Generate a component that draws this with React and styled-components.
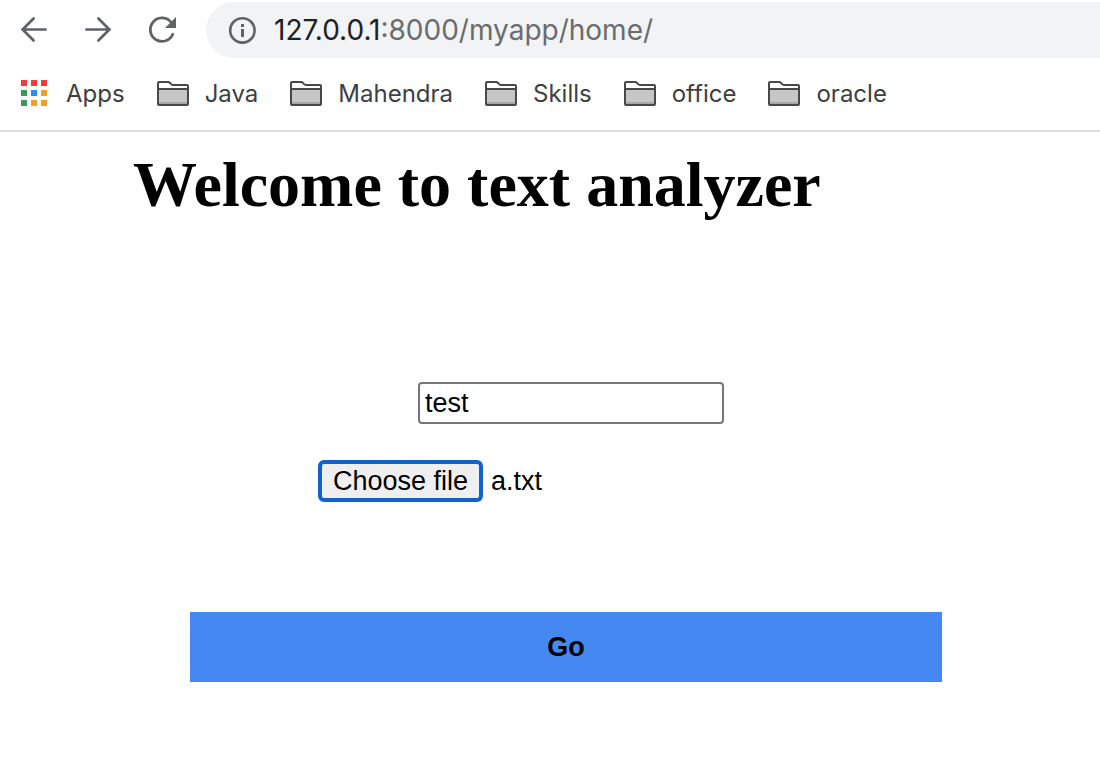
import React, { useRef, useState } from "react";
import styled, { createGlobalStyle } from "styled-components";

const GlobalStyle = createGlobalStyle`
  *, *::before, *::after { box-sizing: border-box; }
  body {
    margin: 0;
    background: #fff;
    color: #000;
    font-family: "Liberation Serif", "Times New Roman", serif;
  }
`;

const BrowserBar = styled.header`
  border-bottom: 2px solid #dadce0;
  font-family: Inter, "Liberation Sans", sans-serif;
`;

const Toolbar = styled.div`
  display: flex;
  align-items: center;
  padding: 2px 0 0 18px;
`;

const NavButtons = styled.nav`
  display: flex;
  gap: 32px;
  margin-right: 28px;
`;

const IconButton = styled.button`
  display: flex;
  width: 32px;
  height: 32px;
  padding: 0;
  border: 0;
  background: none;
  color: #5f6368;
`;

const AddressBar = styled.div`
  display: flex;
  flex: 1;
  align-items: center;
  gap: 16px;
  height: 56px;
  padding-left: 20px;
  border-radius: 28px 0 0 28px;
  background: #f1f3f4;
  color: #5f6368;
`;

const Url = styled.span`
  font-size: 28px;
  line-height: 32px;
  white-space: nowrap;
  color: #6a6c6f;
`;

const Host = styled.span`
  color: #202124;
`;

const Bookmarks = styled.nav`
  display: flex;
  align-items: center;
  gap: 32px;
  height: 72px;
  padding-left: 18px;
`;

const Bookmark = styled.a`
  display: flex;
  align-items: center;
  gap: 16px;
  color: #3c4043;
  font-size: 24px;
  line-height: 32px;
  text-decoration: none;
  white-space: nowrap;
`;

const Page = styled.main`
  padding: 17px 158px 86px 133px;
`;

const Title = styled.h1`
  margin: 0;
  font-size: 64px;
  font-weight: 700;
  line-height: 72px;
  white-space: nowrap;
`;

const AnalyzerForm = styled.form`
  display: flex;
  flex-direction: column;
  align-items: flex-start;
  margin-top: 161px;
  padding-left: 57px;
  font-family: "Liberation Sans", Arial, sans-serif;
  font-size: 27px;
`;

const TextField = styled.input`
  width: 306px;
  height: 42px;
  margin-left: 228px;
  padding: 0 5px;
  border: 2px solid #767676;
  border-radius: 4px;
  outline: none;
  background: #fff;
  color: #000;
  font: inherit;
`;

const FileField = styled.div`
  display: flex;
  align-items: center;
  gap: 8px;
  margin: 36px 0 110px 128px;
`;

const FileButton = styled.button`
  height: 42px;
  padding: 0 11px;
  border: 4px solid #1062cc;
  border-radius: 6px;
  background: #efefef;
  color: #000;
  font: inherit;
  line-height: 32px;
  white-space: nowrap;
`;

const GoButton = styled.button`
  width: 100%;
  height: 70px;
  padding: 0;
  border: 0;
  background: #4688f1;
  color: #000;
  font: inherit;
  font-weight: 700;
`;

const BackIcon = () => (
  <svg width="32" height="32" viewBox="0 0 32 32" fill="none" stroke="currentColor" strokeWidth="2.7" strokeLinecap="round" aria-hidden="true">
    <path d="M27.6 15.5H4.6M15.6 4.5L4.6 15.5l11 11" />
  </svg>
);

const ForwardIcon = () => (
  <svg width="32" height="32" viewBox="0 0 32 32" fill="none" stroke="currentColor" strokeWidth="2.7" strokeLinecap="round" aria-hidden="true">
    <path d="M4.4 15.5h23M16.4 4.5l11 11-11 11" />
  </svg>
);

const ReloadIcon = () => (
  <svg width="32" height="32" viewBox="0 0 32 32" fill="none" aria-hidden="true">
    <path d="M26.8 20.2A11.7 11.7 0 1 1 24.5 7.6" stroke="currentColor" strokeWidth="2.8" strokeLinecap="round" />
    <path d="M30 3v11H19z" fill="currentColor" />
  </svg>
);

const InfoIcon = () => (
  <svg width="32" height="32" viewBox="0 0 32 32" fill="none" aria-hidden="true">
    <circle cx="16.4" cy="16.4" r="12.2" stroke="currentColor" strokeWidth="2.6" />
    <path d="M15 10h3v3h-3zM15 15h3v8h-3z" fill="currentColor" />
  </svg>
);

const APP_COLORS = [
  "#f53a37", "#f53a37", "#f53a37",
  "#3a9a5b", "#2b8cf4", "#f0a024",
  "#3a9a5b", "#f0a024", "#f0a024",
];

const AppsIcon = () => (
  <svg width="32" height="32" viewBox="0 0 32 32" aria-hidden="true">
    {APP_COLORS.map((color, i) => (
      <rect key={i} x={3 + (i % 3) * 10} y={2 + Math.floor(i / 3) * 10} width="6" height="6" fill={color} />
    ))}
  </svg>
);

const FolderIcon = () => (
  <svg width="32" height="32" viewBox="0 0 32 32" aria-hidden="true">
    <path d="M1 11h30v14H1z" fill="#c6c6c6" />
    <path d="M1 24h30v2.5H1z" fill="#a6a6a6" />
    <path
      d="M2 27h28q1 0 1-1V8q0-1-1-1H16q-1.2 0-2-1l-1-1.1Q12.2 4 11.2 4H2q-1 0-1 1v21q0 1 1 1zM1 11h30"
      fill="none"
      stroke="#484848"
      strokeWidth="2"
    />
  </svg>
);

const FOLDERS = ["Java", "Mahendra", "Skills", "office", "oracle"];

export default function App() {
  const picker = useRef(null);
  const [text, setText] = useState("test");
  const [fileName, setFileName] = useState("a.txt");

  return (
    <>
      <GlobalStyle />
      <BrowserBar>
        <Toolbar>
          <NavButtons aria-label="History">
            <IconButton type="button" aria-label="Back"><BackIcon /></IconButton>
            <IconButton type="button" aria-label="Forward"><ForwardIcon /></IconButton>
            <IconButton type="button" aria-label="Reload"><ReloadIcon /></IconButton>
          </NavButtons>
          <AddressBar>
            <IconButton type="button" aria-label="Site information"><InfoIcon /></IconButton>
            <Url><Host>127.0.0.1</Host>:8000/myapp/home/</Url>
          </AddressBar>
        </Toolbar>
        <Bookmarks aria-label="Bookmarks">
          <Bookmark href="#apps"><AppsIcon />Apps</Bookmark>
          {FOLDERS.map((name) => (
            <Bookmark key={name} href={`#${name}`}><FolderIcon />{name}</Bookmark>
          ))}
        </Bookmarks>
      </BrowserBar>
      <Page>
        <Title>Welcome to text analyzer</Title>
        <AnalyzerForm onSubmit={(e) => e.preventDefault()}>
          <TextField
            type="text"
            aria-label="Text"
            value={text}
            onChange={(e) => setText(e.target.value)}
          />
          <FileField>
            <FileButton type="button" onClick={() => picker.current.click()}>Choose file</FileButton>
            <input
              ref={picker}
              type="file"
              hidden
              aria-label="File"
              onChange={(e) => e.target.files[0] && setFileName(e.target.files[0].name)}
            />
            <output>{fileName}</output>
          </FileField>
          <GoButton type="submit">Go</GoButton>
        </AnalyzerForm>
      </Page>
    </>
  );
}
